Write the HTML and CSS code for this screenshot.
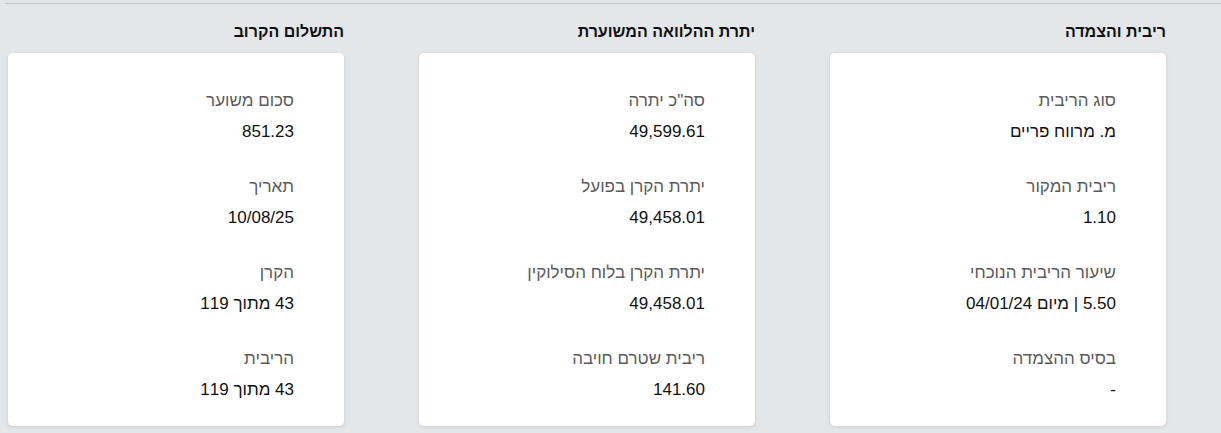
FILE: index.html
```html
<!DOCTYPE html>
<html lang="he" dir="rtl">
<head>
    <meta charset="UTF-8">
    <meta name="viewport" content="width=device-width, initial-scale=1.0">
    <title>פרטי הלוואה</title>
    <link rel="stylesheet" href="styles.css">
</head>
<body>
    <div class="page">
        <div class="columns">
            <section class="panel">
                <h2 class="panel-title">ריבית והצמדה</h2>
                <div class="card">
                    <div class="field">
                        <div class="label">סוג הריבית</div>
                        <div class="value">מ. מרווח פריים</div>
                    </div>
                    <div class="field">
                        <div class="label">ריבית המקור</div>
                        <div class="value">1.10</div>
                    </div>
                    <div class="field">
                        <div class="label">שיעור הריבית הנוכחי</div>
                        <div class="value">5.50 | מיום 04/01/24</div>
                    </div>
                    <div class="field">
                        <div class="label">בסיס ההצמדה</div>
                        <div class="value">-</div>
                    </div>
                </div>
            </section>

            <section class="panel">
                <h2 class="panel-title">יתרת ההלוואה המשוערת</h2>
                <div class="card">
                    <div class="field">
                        <div class="label">סה&quot;כ יתרה</div>
                        <div class="value">49,599.61</div>
                    </div>
                    <div class="field">
                        <div class="label">יתרת הקרן בפועל</div>
                        <div class="value">49,458.01</div>
                    </div>
                    <div class="field">
                        <div class="label">יתרת הקרן בלוח הסילוקין</div>
                        <div class="value">49,458.01</div>
                    </div>
                    <div class="field">
                        <div class="label">ריבית שטרם חויבה</div>
                        <div class="value">141.60</div>
                    </div>
                </div>
            </section>

            <section class="panel">
                <h2 class="panel-title">התשלום הקרוב</h2>
                <div class="card">
                    <div class="field">
                        <div class="label">סכום משוער</div>
                        <div class="value">851.23</div>
                    </div>
                    <div class="field">
                        <div class="label">תאריך</div>
                        <div class="value">10/08/25</div>
                    </div>
                    <div class="field">
                        <div class="label">הקרן</div>
                        <div class="value">43 מתוך 119</div>
                    </div>
                    <div class="field">
                        <div class="label">הריבית</div>
                        <div class="value">43 מתוך 119</div>
                    </div>
                </div>
            </section>
        </div>
    </div>
</body>
</html>
```

FILE: styles.css
```css
body {
    font-family: "Liberation Sans", Arial, sans-serif;
    margin: 0;
    padding: 0;
    background-color: #e4e7ea;
    color: #111;
}

.page {
    margin-top: 3px;
    width: 1216px;
    border-top: 1px solid #c3c6c9;
    height: 429px;
    box-sizing: border-box;
}

.columns {
    display: grid;
    grid-template-columns: repeat(3, 336px);
    column-gap: 75px;
    padding-right: 55px;
    padding-top: 18px;
}

.panel-title {
    margin: 0 0 11px;
    font-size: 16px;
    line-height: 20px;
    font-weight: bold;
    color: #111;
}

.card {
    background-color: #fff;
    border-radius: 5px;
    box-shadow: 0 1px 4px rgba(0, 0, 0, 0.1);
    padding: 38px 50px 26px;
    display: flex;
    flex-direction: column;
    gap: 35px;
}

.label {
    font-size: 17px;
    line-height: 20px;
    color: #5c5c5c;
    margin-bottom: 11px;
}

.value {
    font-size: 17px;
    line-height: 20px;
    color: #111;
}
```
